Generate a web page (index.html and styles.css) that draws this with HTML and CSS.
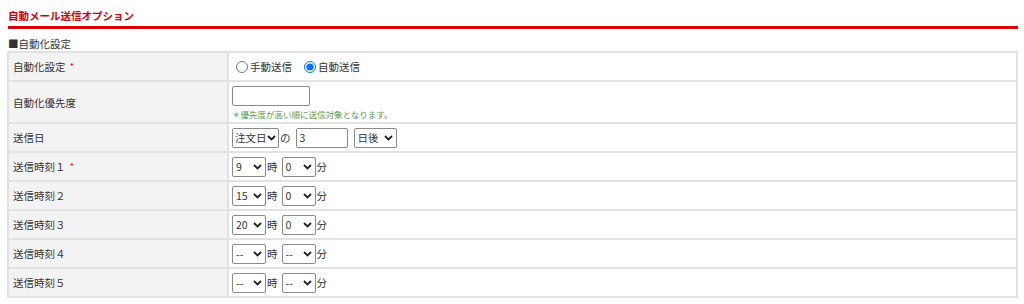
FILE: index.html
```html
<!DOCTYPE html>
<html lang="ja">
<head>
    <meta charset="UTF-8">
    <title>自動メール送信オプション</title>
    <link rel="stylesheet" href="styles.css">
</head>
<body>
    <div class="wrap">
        <h2 class="page-title">自動メール送信オプション</h2>

        <div class="section-title">■自動化設定</div>
        <table class="form-table">
            <tr>
                <th>自動化設定 <span class="req">*</span></th>
                <td>
                    <div class="field">
                        <label class="radio"><input type="radio" name="mode">手動送信</label>
                        <label class="radio"><input type="radio" name="mode" checked>自動送信</label>
                    </div>
                </td>
            </tr>
            <tr class="tall">
                <th>自動化優先度</th>
                <td>
                    <input type="text" class="priority">
                    <div class="note">＊優先度が高い順に送信対象となります。</div>
                </td>
            </tr>
            <tr>
                <th>送信日</th>
                <td>
                    <div class="field">
                        <select class="sel-base"><option>注文日</option></select>
                        <span class="unit">の</span>
                        <input type="text" class="days" value="3">
                        <select class="sel-after"><option>日後</option></select>
                    </div>
                </td>
            </tr>
            <tr>
                <th>送信時刻１ <span class="req">*</span></th>
                <td>
                    <div class="field">
                        <select class="sel-time"><option>9</option></select><span class="unit">時</span>
                        <select class="sel-time"><option>0</option></select><span class="unit">分</span>
                    </div>
                </td>
            </tr>
            <tr>
                <th>送信時刻２</th>
                <td>
                    <div class="field">
                        <select class="sel-time"><option>15</option></select><span class="unit">時</span>
                        <select class="sel-time"><option>0</option></select><span class="unit">分</span>
                    </div>
                </td>
            </tr>
            <tr>
                <th>送信時刻３</th>
                <td>
                    <div class="field">
                        <select class="sel-time"><option>20</option></select><span class="unit">時</span>
                        <select class="sel-time"><option>0</option></select><span class="unit">分</span>
                    </div>
                </td>
            </tr>
            <tr>
                <th>送信時刻４</th>
                <td>
                    <div class="field">
                        <select class="sel-time"><option>--</option></select><span class="unit">時</span>
                        <select class="sel-time"><option>--</option></select><span class="unit">分</span>
                    </div>
                </td>
            </tr>
            <tr>
                <th>送信時刻５</th>
                <td>
                    <div class="field">
                        <select class="sel-time"><option>--</option></select><span class="unit">時</span>
                        <select class="sel-time"><option>--</option></select><span class="unit">分</span>
                    </div>
                </td>
            </tr>
        </table>
    </div>
</body>
</html>
```

FILE: styles.css
```css
* {
    margin: 0;
    padding: 0;
    box-sizing: border-box;
}

body {
    background: #fff;
    color: #333;
    font-family: "Noto Sans CJK JP", "Noto Sans", sans-serif;
    font-size: 10.5px;
}

.wrap {
    width: 1011px;
    margin-left: 7px;
}

/* タイトル */
.page-title {
    font-size: 10.5px;
    font-weight: bold;
    color: #d00000;
    line-height: 14px;
    padding-top: 9px;
    padding-bottom: 3px;
    margin-left: 1px;
    border-bottom: 3px solid #d80000;
}

.section-title {
    line-height: 14px;
    margin-top: 8px;
    margin-left: 1px;
}

/* フォームテーブル */
.form-table {
    width: 100%;
    border-collapse: collapse;
    border: 2px solid #e2e2e2;
}

.form-table th,
.form-table td {
    border: 2px solid #e2e2e2;
    height: 29px;
    vertical-align: middle;
    text-align: left;
}

.form-table th {
    width: 220px;
    background: #f3f3f3;
    font-weight: normal;
    padding: 0 4px;
}

.form-table td {
    padding: 0 3px;
}

.form-table tr.tall td,
.form-table tr.tall th {
    height: 42px;
}

.req {
    color: #e00000;
    font-size: 9px;
    position: relative;
    top: -1px;
    margin-left: 2px;
}

.field {
    display: flex;
    align-items: center;
}

.radio {
    display: flex;
    align-items: center;
    margin-right: 8px;
}

.radio input {
    width: 12px;
    height: 12px;
    margin: 0 2px 0 4px;
}

/* 入力欄 */
input[type="text"],
select {
    font-family: inherit;
    font-size: 10.5px;
    color: #333;
    height: 20px;
    border: 1px solid #8a8a8a;
    border-radius: 2px;
    background-color: #fff;
}

input[type="text"] {
    padding: 0 3px;
}

/* セレクトの矢印 */
select {
    appearance: none;
    -webkit-appearance: none;
    padding: 0 12px 0 3px;
    background-image: url("data:image/svg+xml,%3Csvg xmlns='http://www.w3.org/2000/svg' width='9' height='6' viewBox='0 0 9 6'%3E%3Cpath d='M1 1l3.5 3.5L8 1' fill='none' stroke='%23222' stroke-width='1.8'/%3E%3C/svg%3E");
    background-repeat: no-repeat;
    background-position: right 3px center;
    background-size: 9px 6px;
}

.priority {
    width: 78px;
    display: block;
    margin-top: 2px;
}

.note {
    color: #5a9a4a;
    font-size: 8.5px;
    line-height: 12px;
    margin-top: 2px;
}

.sel-base {
    width: 47px;
    padding: 0 11px 0 2px;
    background-position: right 2px center;
}

.days {
    width: 52px;
    margin-left: 1px;
}

.sel-after {
    width: 43px;
    margin-left: 6px;
}

.sel-time {
    width: 34px;
}

.unit {
    margin: 0 4px 0 1px;
}
```
